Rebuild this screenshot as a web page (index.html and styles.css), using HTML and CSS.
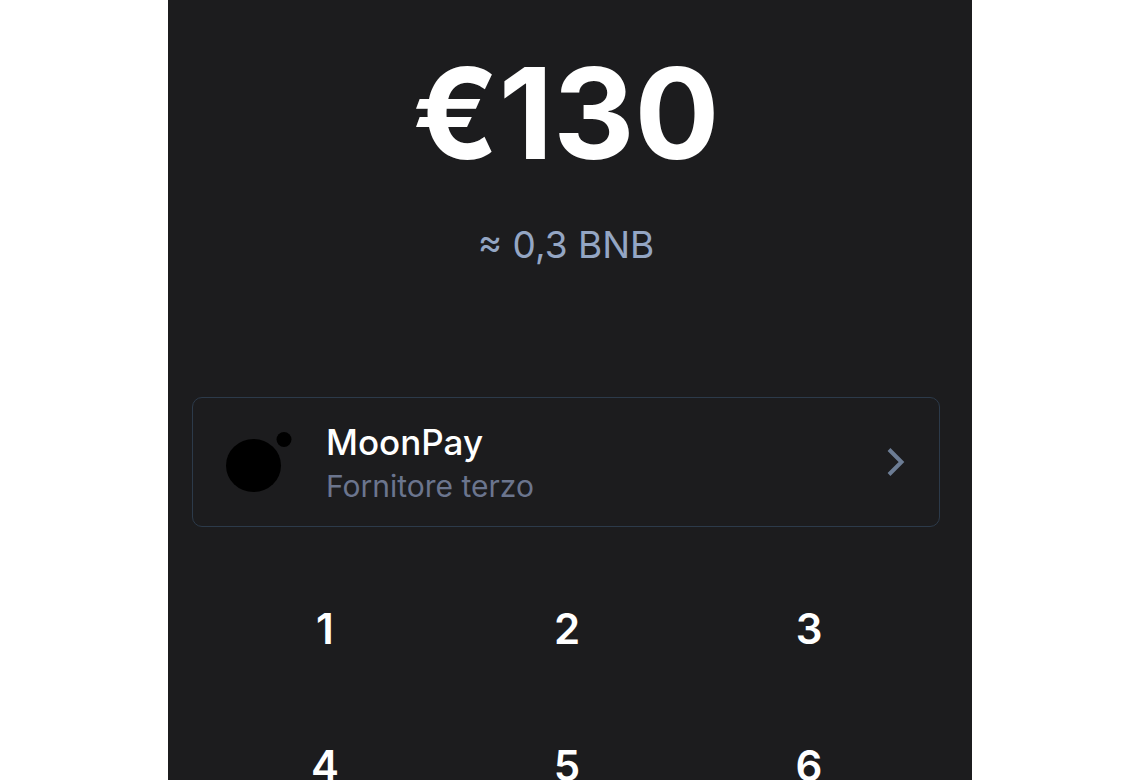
FILE: index.html
```html
<!DOCTYPE html>
<html lang="it">
<head>
    <meta charset="UTF-8">
    <meta name="viewport" content="width=device-width, initial-scale=1.0">
    <title>Acquista BNB</title>
    <link rel="stylesheet" href="styles.css">
</head>
<body>
    <main class="buy-screen">
        <h1 class="amount">€130</h1>
        <p class="conversion">≈ 0,3 BNB</p>

        <!-- Fornitore selezionato -->
        <button type="button" class="provider">
            <svg class="provider-logo" viewBox="0 0 66 60" aria-hidden="true">
                <ellipse cx="27.5" cy="33.5" rx="27.5" ry="26.5"/>
                <circle cx="58" cy="7.5" r="7.5"/>
            </svg>
            <span class="provider-text">
                <span class="provider-name">MoonPay</span>
                <span class="provider-type">Fornitore terzo</span>
            </span>
            <svg class="chevron" viewBox="0 0 18 28" aria-hidden="true">
                <path d="M2 1.5L14.5 14L2 26.5"/>
            </svg>
        </button>

        <!-- Tastierino -->
        <div class="keypad">
            <button type="button">1</button>
            <button type="button">2</button>
            <button type="button">3</button>
            <button type="button">4</button>
            <button type="button">5</button>
            <button type="button">6</button>
        </div>
    </main>
</body>
</html>
```
FILE: styles.css
```css
* {
    box-sizing: border-box;
}
body {
    margin: 0;
    background-color: #fff;
    font-family: Inter, "Liberation Sans", sans-serif;
}
.buy-screen {
    max-width: 804px;
    height: 100vh;
    margin: 0 auto;
    padding: 49px 32px 0 24px;
    overflow: hidden;
    background-color: #1c1c1e;
    color: #fff;
}
.amount {
    margin: 0;
    font-size: 126px;
    font-weight: 700;
    line-height: 128px;
    text-align: center;
}
.conversion {
    margin: 44px 0 128px;
    font-size: 37px;
    line-height: 48px;
    text-align: center;
    color: #94a6c4;
}
button {
    border: none;
    background: none;
    color: inherit;
    font-family: inherit;
    cursor: pointer;
}

/* Riquadro del fornitore */
.provider {
    display: flex;
    align-items: center;
    width: 100%;
    height: 130px;
    padding: 0 34px 0 33px;
    border: 1px solid #2c3a4a;
    border-radius: 10px;
    text-align: left;
}
.provider-logo {
    width: 66px;
    height: 60px;
    fill: #000;
}
.provider-text {
    flex: 1;
    padding-top: 4px;
    margin-left: 34px;
}
.provider-name,
.provider-type {
    display: block;
    line-height: 44px;
}
.provider-name {
    font-size: 35px;
    font-weight: 500;
}
.provider-type {
    font-size: 30px;
    color: #6b758e;
}
.chevron {
    width: 18px;
    height: 28px;
    fill: none;
    stroke: #6c7c94;
    stroke-width: 4;
}

/* Tasti numerici */
.keypad {
    display: grid;
    grid-template-columns: repeat(3, 1fr);
    grid-auto-rows: 137px;
    margin-top: 33px;
    padding: 0 10px 0 12px;
}
.keypad button {
    padding: 0;
    font-size: 42px;
    font-weight: 600;
}
```
